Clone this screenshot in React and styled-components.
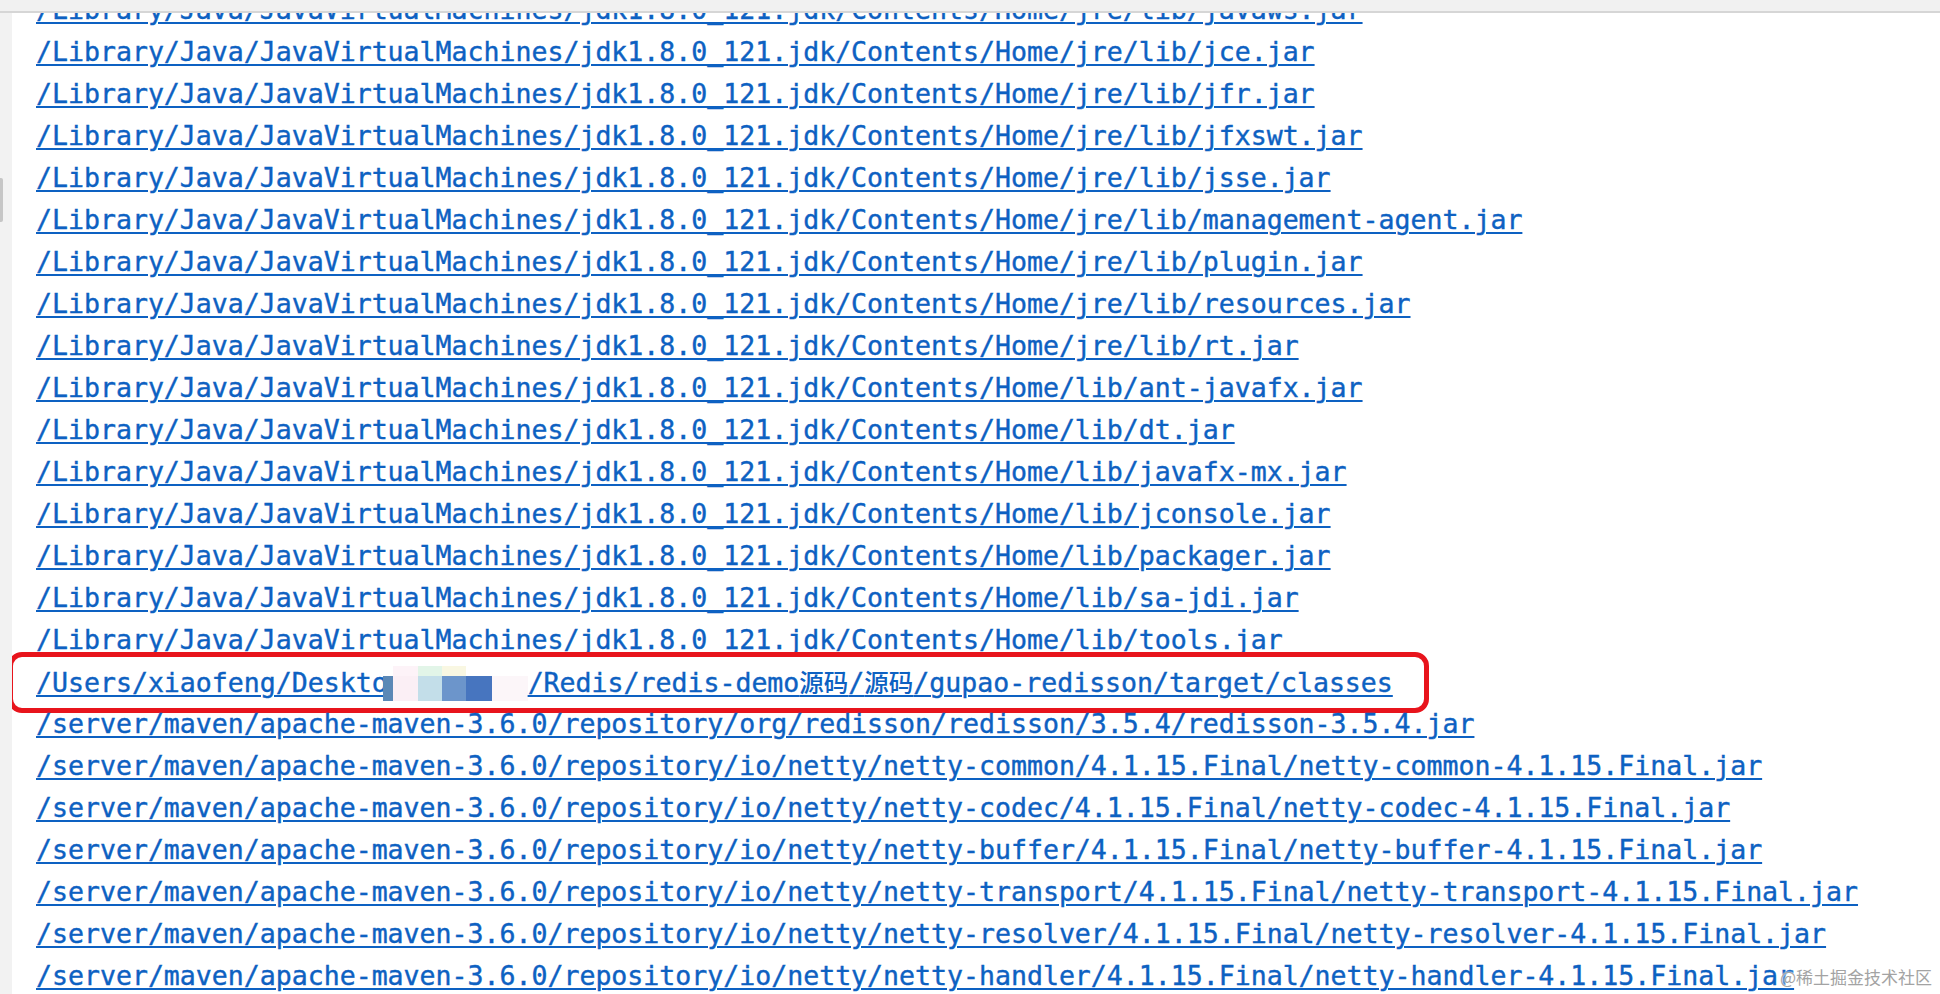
import React from "react";
import styled, {createGlobalStyle} from "styled-components";

const GlobalStyle = createGlobalStyle`
  html, body {
    margin: 0;
    padding: 0;
    background: #ffffff;
    overflow: hidden;
  }
`;

const JDK = "/Library/Java/JavaVirtualMachines/jdk1.8.0_121.jdk/Contents/Home";
const M2 = "/server/maven/apache-maven-3.6.0/repository";

const before = [
    `${JDK}/jre/lib/javaws.jar`,
    `${JDK}/jre/lib/jce.jar`,
    `${JDK}/jre/lib/jfr.jar`,
    `${JDK}/jre/lib/jfxswt.jar`,
    `${JDK}/jre/lib/jsse.jar`,
    `${JDK}/jre/lib/management-agent.jar`,
    `${JDK}/jre/lib/plugin.jar`,
    `${JDK}/jre/lib/resources.jar`,
    `${JDK}/jre/lib/rt.jar`,
    `${JDK}/lib/ant-javafx.jar`,
    `${JDK}/lib/dt.jar`,
    `${JDK}/lib/javafx-mx.jar`,
    `${JDK}/lib/jconsole.jar`,
    `${JDK}/lib/packager.jar`,
    `${JDK}/lib/sa-jdi.jar`,
    `${JDK}/lib/tools.jar`,
];

const netty = ["common", "codec", "buffer", "transport", "resolver", "handler"];

const after = [
    `${M2}/org/redisson/redisson/3.5.4/redisson-3.5.4.jar`,
    ...netty.map(n => `${M2}/io/netty/netty-${n}/4.1.15.Final/netty-${n}-4.1.15.Final.jar`),
];

// blurred blocks covering part of the user's path
const blocks = [
    {w: 10, top: "#ffffff", bottom: "#5b88b6"},
    {w: 25, top: "#fdf3f8", bottom: "#fbeff5"},
    {w: 24, top: "#e2f5e8", bottom: "#c3dee9"},
    {w: 24, top: "#f9f7e2", bottom: "#6c95cb"},
    {w: 26, top: "#ffffff", bottom: "#4775bf"},
    {w: 36, top: "#ffffff", bottom: "#fcf6f9"},
];

export default function App() {
    return (
        <Page>
            <GlobalStyle/>
            <TopBar/>
            <Body>
                <Gutter>
                    <Thumb/>
                </Gutter>
                <Content>
                    <List>
                        {before.map(p => (
                            <Row key={p}><Path href="#">{p}</Path></Row>
                        ))}
                        <Row highlighted>
                            <Path href="#">/Users/xiaofeng/Deskto</Path>
                            <Mosaic>
                                {blocks.map((b, i) => (
                                    <Block key={i} w={b.w} top={b.top} bottom={b.bottom}/>
                                ))}
                            </Mosaic>
                            <Path href="#">/Redis/redis-demo<Cjk>源码</Cjk>/<Cjk>源码</Cjk>/gupao-redisson/target/classes</Path>
                        </Row>
                        {after.map(p => (
                            <Row key={p}><Path href="#">{p}</Path></Row>
                        ))}
                    </List>
                </Content>
            </Body>
            <Watermark>@稀土掘金技术社区</Watermark>
        </Page>
    );
}

const Page = styled.div`
  position: relative;
  display: flex;
  flex-direction: column;
  width: 1940px;
  height: 994px;
  overflow: hidden;
  background: #ffffff;
`;

const TopBar = styled.div`
  flex: none;
  height: 11px;
  background: #f1f1f1;
  border-bottom: 2px solid #d6d6d6;
`;

const Body = styled.div`
  flex: 1;
  display: flex;
  min-height: 0;
`;

const Gutter = styled.div`
  flex: none;
  width: 12px;
  background: #f2f2f2;
  padding-top: 165px;
  box-sizing: border-box;
`;

const Thumb = styled.div`
  width: 3px;
  height: 44px;
  background: #c6c6c6;
  border-radius: 0 2px 2px 0;
`;

const Content = styled.div`
  flex: 1;
  overflow: hidden;
  padding-left: 24px;
`;

const List = styled.div`
  margin-top: -24px;
  font-family: "DejaVu Sans Mono", "Noto Sans CJK SC", monospace;
  font-size: 26.56px;
  line-height: 42px;
  white-space: nowrap;
`;

const Row = styled.div`
  position: relative;
  height: 42px;

  ${props => props.highlighted && `
    &::after {
        content: "";
        position: absolute;
        left: -28px;
        top: -9px;
        width: 1421px;
        bottom: -10px;
        box-sizing: border-box;
        border: 5px solid #e8141c;
        border-radius: 14px;
        pointer-events: none;
    }
  `}
`;

const Path = styled.a`
  color: #0d61c2;
  -webkit-text-stroke: 0.4px #0d61c2;
  text-decoration: underline;
  text-decoration-thickness: 2px;
  text-underline-offset: 3px;
`;

const Cjk = styled.span`
  font-family: "Noto Sans CJK SC", sans-serif;
  font-size: 24.5px;
  font-weight: 500;
  -webkit-text-stroke: 0;
`;

const Mosaic = styled.span`
  display: inline-flex;
  vertical-align: top;
  margin-left: -5px;
  height: 42px;
  padding-top: 5px;
  box-sizing: border-box;
`;

const Block = styled.span`
  display: flex;
  flex-direction: column;
  width: ${props => props.w}px;
  height: 35px;

  &::before {
    content: "";
    height: 10px;
    background: ${props => props.top};
  }

  &::after {
    content: "";
    height: 25px;
    background: ${props => props.bottom};
  }
`;

const Watermark = styled.div`
  position: absolute;
  right: 8px;
  bottom: 7px;
  font-family: "Noto Sans CJK SC", sans-serif;
  font-size: 17px;
  line-height: 20px;
  color: #a3a3a3;
  text-shadow: 0 0 2px #ffffff, 0 0 2px #ffffff;
`;
